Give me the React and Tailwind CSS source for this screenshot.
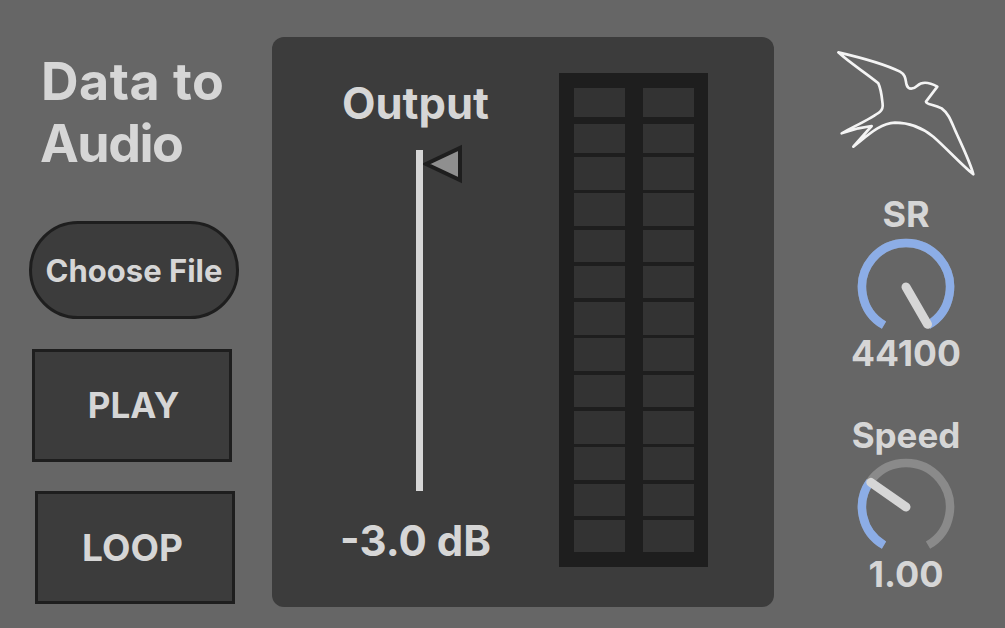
import React from 'react'

const FONT = "font-['Inter','Noto_Sans',sans-serif]"

// レベルメーターの行の高さ（上から）
const METER_ROWS = [
  'h-[29px] mb-[7px]', 'h-[29px] mb-[4px]', 'h-[32.5px] mb-[3.8px]', 'h-[32.5px] mb-[3.8px]',
  'h-[32.5px] mb-[3.8px]', 'h-[32.5px] mb-[3.8px]', 'h-[32.5px] mb-[3.8px]', 'h-[32.5px] mb-[3.8px]',
  'h-[32.5px] mb-[3.8px]', 'h-[32.5px] mb-[3.8px]', 'h-[32.5px] mb-[3.8px]', 'h-[32.5px] mb-[3.8px]',
  'h-[32.5px]',
]

function polar(r, deg) {
  const a = (deg * Math.PI) / 180
  return [60 + r * Math.sin(a), 60 - r * Math.cos(a)]
}

function arc(r, from, to) {
  const [x1, y1] = polar(r, from)
  const [x2, y2] = polar(r, to)
  return `M${x1} ${y1}A${r} ${r} 0 ${to - from > 180 ? 1 : 0} 1 ${x2} ${y2}`
}

function Knob({ angle }) {
  const [tx, ty] = polar(43, angle)
  return (
    <svg viewBox="0 0 120 120" className="w-[120px] h-[120px] block">
      <path d={arc(44, -150, 150)} fill="none" stroke="#8a8a8a" strokeWidth="8.5" />
      <path d={arc(44, -150, angle)} fill="none" stroke="#8cade6" strokeWidth="8.5" />
      <line x1="60" y1="60" x2={tx} y2={ty} stroke="#d6d6d6" strokeWidth="9" strokeLinecap="round" />
    </svg>
  )
}

function Bird() {
  return (
    <svg viewBox="0 0 615 510" className="w-[205px] h-[170px] block">
      <path
        d="M115 67C180 82 250 100 300 125C318 135 316 150 320 165C325 180 340 178 352 167C365 155 385 155 412 170L378 215C380 224 400 222 425 235C445 250 452 270 465 300C485 345 510 395 520 433C480 400 440 355 400 320C360 288 325 278 285 278C240 280 205 315 160 350L215 288L175 295L125 310C160 290 215 265 240 245C252 235 248 225 247 215C245 195 242 175 235 160C200 130 150 100 115 67Z"
        fill="none"
        stroke="#f4f4f4"
        strokeWidth="8"
        strokeLinejoin="round"
      />
    </svg>
  )
}

function SquareButton({ label, className }) {
  return (
    <button
      type="button"
      className={`w-[200px] h-[113px] flex items-center justify-center bg-[#3c3c3c] border-[3px] border-[#1e1e1e] font-bold text-[#d6d6d6] ${className}`}
    >
      {label}
    </button>
  )
}

function MeterColumn() {
  return (
    <div className="w-[51px] flex flex-col">
      {METER_ROWS.map((row, i) => (
        <div key={i} className={`${row} bg-[#333333]`} />
      ))}
    </div>
  )
}

export default function App() {
  return (
    <div className={`w-[1005px] h-[628px] overflow-hidden flex bg-[#666666] text-[#d6d6d6] ${FONT}`}>
      {/* 左カラム */}
      <div className="w-[272px] shrink-0 flex flex-col">
        <h1 className="mt-[51px] ml-[41px] text-[52px] leading-[62px] font-bold tracking-[0.5px]">
          Data to
          <br />
          <span className="-ml-[1px] tracking-[-1.5px]">Audio</span>
        </h1>
        <button
          type="button"
          className="mt-[46px] ml-[29px] w-[210px] h-[98px] pt-[3px] rounded-full bg-[#3c3c3c] border-[3px] border-[#1e1e1e] text-[31px] font-bold text-[#d6d6d6]"
        >
          Choose File
        </button>
        <SquareButton label="PLAY" className="mt-[30px] ml-[32px] pl-[3px] text-[35px]" />
        <SquareButton label="LOOP" className="mt-[29px] ml-[35px] pr-[5px] text-[37px]" />
      </div>

      {/* 中央パネル */}
      <div className="mt-[37px] w-[502px] h-[570px] shrink-0 rounded-[12px] bg-[#3c3c3c] flex">
        <div className="w-[287px] shrink-0 flex flex-col items-center">
          <div className="mt-[36px] text-[43.5px] leading-[60px] font-bold">Output</div>
          <div className="relative mt-[17px] ml-[7px] w-[7px] h-[341px] bg-[#d6d6d6]">
            <svg viewBox="0 0 42 42" className="absolute left-[7px] top-[-6px] w-[42px] h-[42px]">
              <path d="M3 20L37 4V36Z" fill="#8f8f8f" stroke="#1e1e1e" strokeWidth="4" />
            </svg>
          </div>
          <div className="mt-[20px] text-[42px] leading-[60px] font-bold">-3.0 dB</div>
        </div>
        <div className="mt-[36px] w-[149px] h-[494px] bg-[#1e1e1e] pt-[15px] pl-[14.5px] flex gap-[18px]">
          <MeterColumn />
          <MeterColumn />
        </div>
      </div>

      {/* 右カラム */}
      <div className="w-[231px] shrink-0 flex flex-col">
        <div className="mt-[30px] ml-[26px]">
          <Bird />
        </div>
        <div className="ml-[66px] w-[132px] flex flex-col items-center">
          <div className="-mt-[4px] text-[36px] leading-[36px] font-bold">SR</div>
          <div className="-mt-[5px]">
            <Knob angle={150} />
          </div>
          <div className="-mt-[11px] text-[35.5px] leading-[36px] font-bold">44100</div>
          <div className="mt-[45px] text-[35px] leading-[36px] font-bold">Speed</div>
          <div className="-mt-[6px]">
            <Knob angle={-55} />
          </div>
          <div className="-mt-[11px] text-[36px] leading-[36px] font-bold">1.00</div>
        </div>
      </div>
    </div>
  )
}
